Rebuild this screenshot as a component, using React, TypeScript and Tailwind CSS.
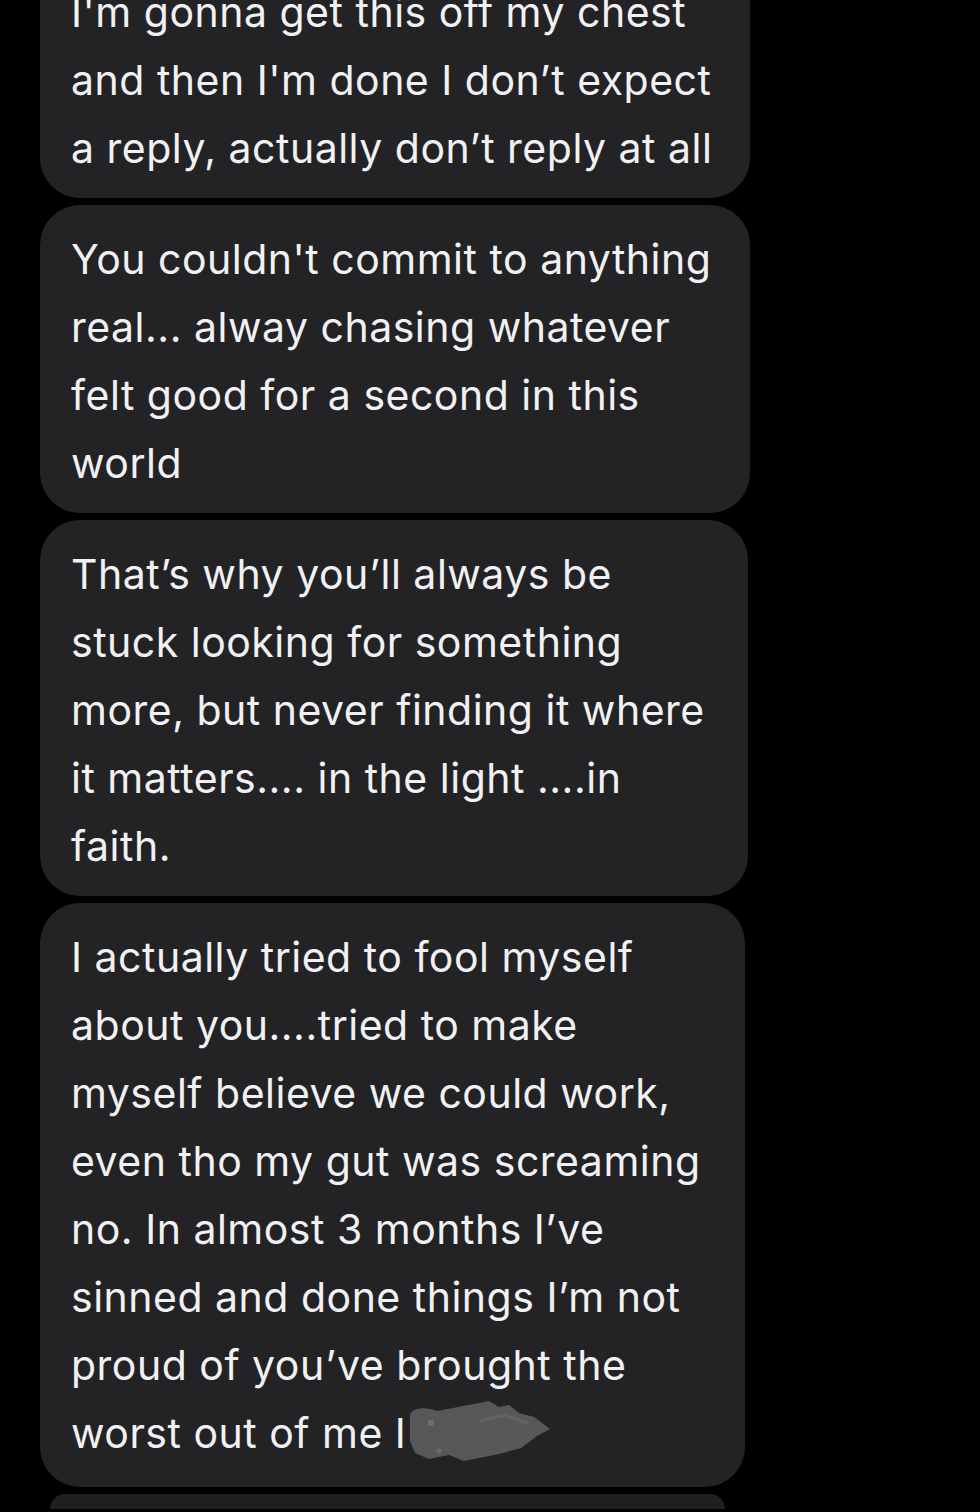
const bubbles: { w: string; lines: string[] }[] = [
  {
    w: "w-[710px]",
    lines: [
      "I'm gonna get this off my chest",
      "and then I'm done I don\u2019t expect",
      "a reply, actually don\u2019t reply at all",
    ],
  },
  {
    w: "w-[710px]",
    lines: [
      "You couldn't commit to anything",
      "real... alway chasing whatever",
      "felt good for a second in this",
      "world",
    ],
  },
  {
    w: "w-[708px]",
    lines: [
      "That\u2019s why you\u2019ll always be",
      "stuck looking for something",
      "more, but never finding it where",
      "it matters.... in the light ....in",
      "faith.",
    ],
  },
];

const last = [
  "I actually tried to fool myself",
  "about you....tried to make",
  "myself believe we could work,",
  "even tho my gut was screaming",
  "no. In almost 3 months I\u2019ve",
  "sinned and done things I\u2019m not",
  "proud of you\u2019ve brought the",
];

// redaction smudge over the end of the last line
function Scribble() {
  return (
    <svg
      width="150"
      height="64"
      viewBox="0 0 150 64"
      className="absolute left-[calc(100%+3px)] top-[2px]"
    >
      <path
        d="M1 14 C4 6 18 6 28 10 L60 4 L80 0 L90 6 L100 4 L110 12 L125 16 L141 28 L128 35 L112 47 L90 53 L70 57 L55 60 L40 54 L20 58 L6 52 L1 40 Z"
        fill="#58585a"
      />
      <circle cx="22" cy="22" r="3" fill="#707072" />
      <circle cx="30" cy="50" r="2.5" fill="#6c6c6e" />
      <path d="M70 20 L96 14 L118 22" stroke="#626264" strokeWidth="3" fill="none" />
    </svg>
  );
}

export default function App() {
  return (
    <div className="w-[980px] h-[1512px] overflow-hidden bg-black">
      <div
        className="flex flex-col gap-[7px] pl-[40px] -mt-[42px] text-[41px] leading-[68px] text-[#f1f1f3] tracking-[0.5px]"
        style={{ fontFamily: "Inter, 'Liberation Sans', sans-serif" }}
      >
        {bubbles.map((b, i) => (
          <div key={i} className={`${b.w} rounded-[40px] bg-[#232325] pl-[31px] pt-[20px] pb-[16px]`}>
            {b.lines.map((l, j) => (
              <div key={j} className="whitespace-nowrap">
                {l}
              </div>
            ))}
          </div>
        ))}
        <div className="w-[705px] rounded-[40px] bg-[#232325] pl-[31px] pt-[20px] pb-[20px]">
          {last.map((l, j) => (
            <div key={j} className="whitespace-nowrap">
              {l}
            </div>
          ))}
          <div className="whitespace-nowrap">
            <span className="relative inline-block">
              worst out of me I
              <Scribble />
            </span>
          </div>
        </div>
        <div className="ml-[10px] w-[675px] h-[15px] rounded-t-[40px] bg-[#1f1f21]" />
      </div>
    </div>
  );
}
